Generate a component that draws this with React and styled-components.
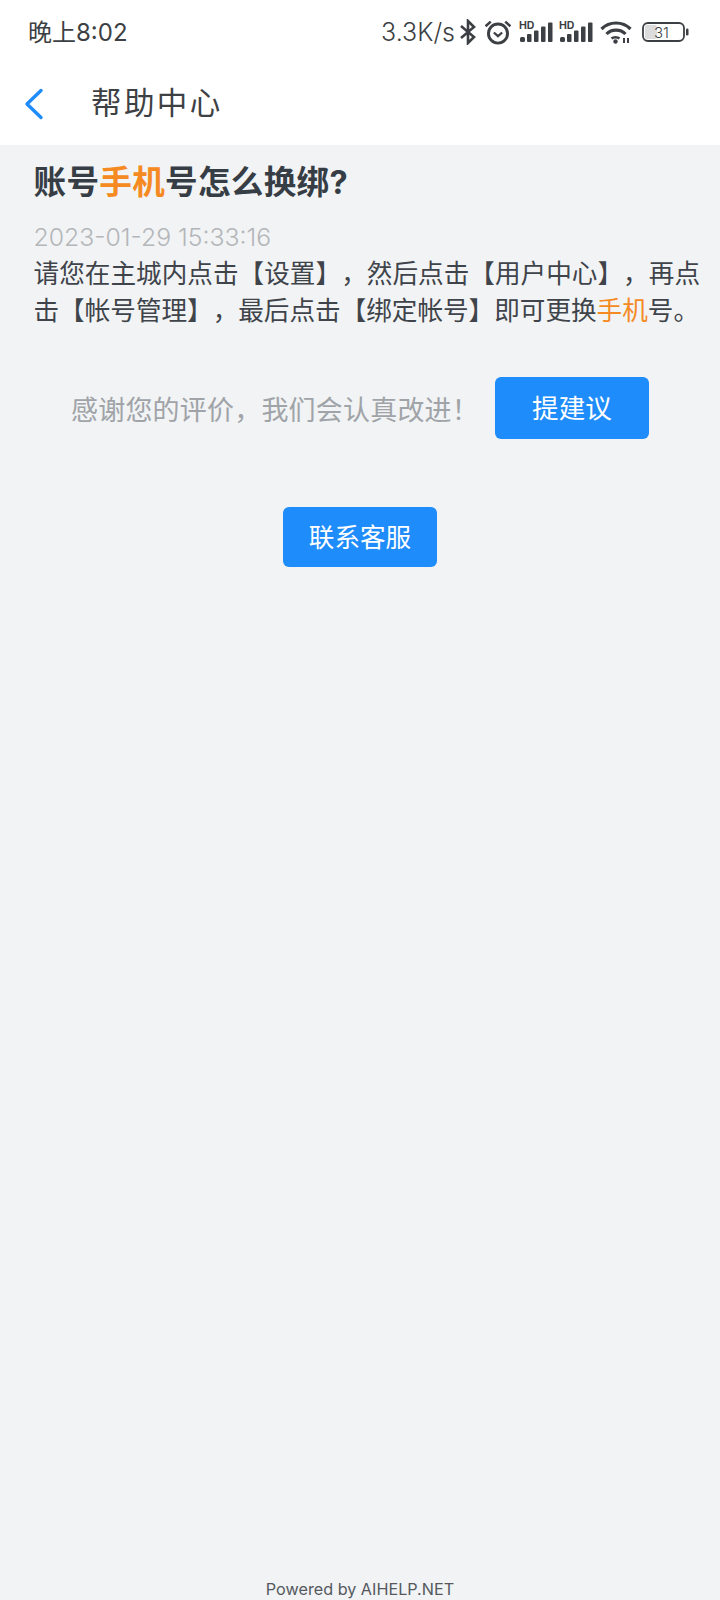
import styled, { createGlobalStyle } from "styled-components";

const GlobalStyle = createGlobalStyle`
  html, body {
    margin: 0;
    padding: 0;
    background: #f1f3f5;
    font-family: "Inter", "Noto Sans CJK SC", sans-serif;
    text-spacing-trim: space-all;
  }
  * { box-sizing: border-box; }
`;

const Page = styled.div`
  display: flex;
  flex-direction: column;
  height: 1600px;
  overflow: hidden;
`;

const TopArea = styled.div`
  background: #fff;
  height: 145px;
`;

const StatusBar = styled.div`
  display: flex;
  align-items: center;
  height: 64px;
  padding: 0 31px 0 28px;
  color: #3c3f43;
`;

const Time = styled.span`
  font-size: 24px;
  margin-bottom: 4px;
`;

const StatusRight = styled.div`
  display: flex;
  align-items: center;
  margin-left: auto;
`;

const Speed = styled.span`
  font-size: 25px;
  font-weight: 300;
  margin-right: 4px;
`;

const NavBar = styled.div`
  display: flex;
  align-items: center;
  height: 81px;
  padding: 0 0 1px 24px;
`;

const BackButton = styled.button`
  display: flex;
  width: 67px;
  padding: 0;
  border: 0;
  background: none;
`;

const NavTitle = styled.h1`
  margin: 0 0 6px;
  font-size: 30.5px;
  font-weight: 400;
  letter-spacing: 2.4px;
  color: #3e4144;
`;

const Article = styled.div`
  padding: 16px 20px 0 33.5px;
`;

const Title = styled.h2`
  margin: 0;
  font-size: 32.6px;
  line-height: 42px;
  font-weight: 700;
  letter-spacing: 0.3px;
  color: #363d45;
`;

const Mark = styled.span`
  color: #f58a22;
`;

const DateLine = styled.div`
  margin-top: 16px;
  font-size: 24.8px;
  line-height: 36px;
  font-weight: 300;
  color: #b4b6b9;
`;

const Body = styled.p`
  margin: 0;
  font-size: 25.6px;
  line-height: 37px;
  color: #3f444a;
  text-align: justify;
`;

const Actions = styled.div`
  display: flex;
  flex-direction: column;
  align-items: center;
  gap: 68px;
  margin-top: 48px;
`;

const FeedbackRow = styled.div`
  display: flex;
  align-items: center;
  gap: 16px;
`;

const FeedbackText = styled.span`
  font-size: 27px;
  letter-spacing: 0.2px;
  color: #a0a3a7;
  white-space: nowrap;
`;

const ActionButton = styled.button`
  width: 154px;
  height: ${(p) => p.$height}px;
  padding: 0 0 3px;
  border: 0;
  border-radius: 6px;
  background: #1e8cfa;
  color: #fff;
  font-family: inherit;
  font-size: ${(p) => p.$size}px;
`;

const Footer = styled.div`
  margin-top: auto;
  height: 22px;
  line-height: 22px;
  text-align: center;
  font-size: 16.2px;
  color: #55595e;
`;

const Glyph = styled.svg`
  display: block;
  flex: none;
  margin-left: ${(p) => p.$gap || 0}px;
`;

const BatteryLabel = styled.text`
  font-family: "Inter", sans-serif;
  font-size: 15px;
  font-weight: 300;
  fill: #3c3f43;
`;

const HdLabel = styled.text`
  font-family: "Inter", sans-serif;
  font-size: 10.5px;
  font-weight: 700;
  fill: #3c3f43;
`;

function Signal({ gap }) {
  return (
    <Glyph $gap={gap} width="34" height="24" viewBox="0 0 34 24">
      <HdLabel x="0" y="9">HD</HdLabel>
      <rect x="1" y="17" width="5" height="5" rx="1.5" fill="#3c3f43" />
      <rect x="8" y="14" width="4.5" height="8" rx="1" fill="#3c3f43" />
      <rect x="15" y="10.5" width="4.5" height="11.5" rx="1" fill="#3c3f43" />
      <rect x="22" y="6.5" width="4.5" height="15.5" rx="1" fill="#3c3f43" />
      <rect x="29" y="2.5" width="4.5" height="19.5" rx="1" fill="#3c3f43" />
    </Glyph>
  );
}

export default function App() {
  return (
    <>
      <GlobalStyle />
      <Page>
        <TopArea>
          <StatusBar>
            <Time>晚上8:02</Time>
            <StatusRight>
              <Speed>3.3K/s</Speed>
              <Glyph width="18" height="26" viewBox="0 0 18 26" fill="none" stroke="#3c3f43" strokeWidth="2.6">
                <path d="M2 7l13 11-6 6V2l6 6L2 19" />
              </Glyph>
              <Glyph $gap={7} width="28" height="27" viewBox="0 0 27 26" fill="none" stroke="#3c3f43">
                <circle cx="13.5" cy="14" r="9.2" strokeWidth="2.8" />
                <path d="M9.5 13l4 3.5 4-3.5" strokeWidth="2.2" />
                <path d="M1.5 7l5-4.5M25.5 7l-5-4.5" strokeWidth="2.4" />
              </Glyph>
              <Signal gap={7} />
              <Signal gap={6} />
              <Glyph $gap={7} width="32" height="24" viewBox="0 0 32 24" fill="none" stroke="#3c3f43" strokeWidth="3.2">
                <path d="M1.5 9C9.5 1 22.5 1 30.5 9" />
                <path d="M6.5 14C11.5 8.8 20.5 8.8 25.5 14" />
                <path d="M11.5 18.5C13.5 16.8 17.5 16.8 19.5 18.5" strokeWidth="2.6" />
                <circle cx="15.5" cy="21.5" r="2.2" fill="#3c3f43" stroke="none" />
                <path d="M24 18v5M28 18v5" strokeWidth="2" />
              </Glyph>
              <Glyph $gap={10} width="47" height="22" viewBox="0 0 47 22" fill="none">
                <rect x="1" y="2" width="41" height="18" rx="5" stroke="#3c3f43" strokeWidth="1.8" />
                <rect x="3" y="4" width="12" height="14" rx="2" fill="#dcdcdc" />
                <BatteryLabel x="12" y="16.5">31</BatteryLabel>
                <rect x="44" y="7.5" width="2.5" height="7" rx="1.2" fill="#3c3f43" />
              </Glyph>
            </StatusRight>
          </StatusBar>
          <NavBar>
            <BackButton aria-label="返回">
              <Glyph width="20" height="34" viewBox="0 0 20 34" fill="none" stroke="#1e8cfa" strokeWidth="3.4" strokeLinecap="round" strokeLinejoin="round">
                <path d="M17 3.5L3 17l14 13.5" />
              </Glyph>
            </BackButton>
            <NavTitle>帮助中心</NavTitle>
          </NavBar>
        </TopArea>
        <Article>
          <Title>
            账号<Mark>手机</Mark>号怎么换绑?
          </Title>
          <DateLine>2023-01-29 15:33:16</DateLine>
          <Body>
            请您在主城内点击【设置】，然后点击【用户中心】，再点击【帐号管理】，最后点击【绑定帐号】即可更换<Mark>手机</Mark>号。
          </Body>
        </Article>
        <Actions>
          <FeedbackRow>
            <FeedbackText>感谢您的评价，我们会认真改进！</FeedbackText>
            <ActionButton $height={62} $size={26.6}>提建议</ActionButton>
          </FeedbackRow>
          <ActionButton $height={60} $size={25.6}>联系客服</ActionButton>
        </Actions>
        <Footer>Powered by AIHELP.NET</Footer>
      </Page>
    </>
  );
}
